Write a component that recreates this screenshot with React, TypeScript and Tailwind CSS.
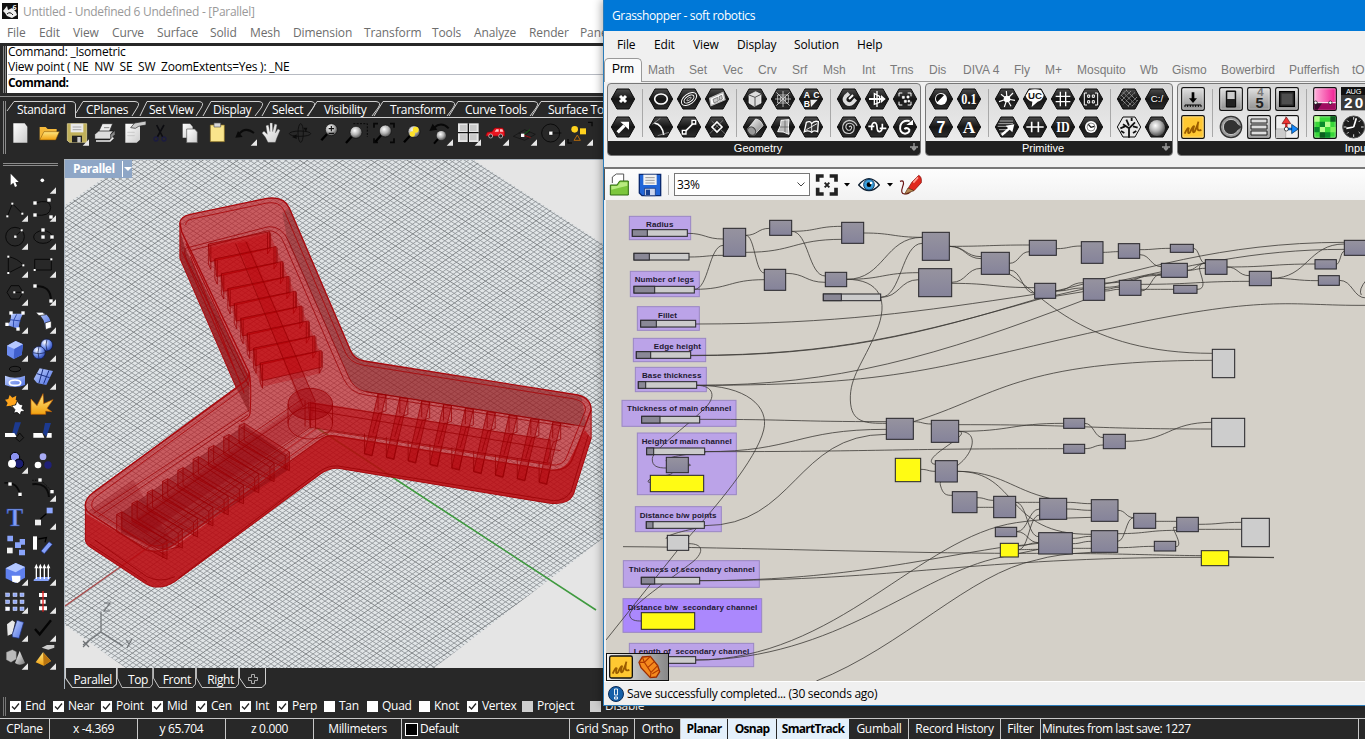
import React from "react";

type P = { children?: React.ReactNode };

const UI = "font-['Open_Sans','Noto_Sans',sans-serif]";

/* ---------- shared icon cells (28px cell, 84 unit grid) ---------- */

function Cell({ children, more }: P & { more?: boolean }) {
  return (
    <svg viewBox="0 0 84 84" className="block h-7 w-7 shrink-0" fill="none">
      {children}
      {more && <path d="M81 61V80H62Z" fill="#e8e8e8" />}
    </svg>
  );
}

function Lens({ x, y, children }: P & { x: number; y: number }) {
  return (
    <g>
      <path d={`M${x - 12} ${y + 12}L${x - 30} ${y + 32}`} stroke="#000" strokeWidth="7" />
      <circle cx={x} cy={y} r="18" fill="url(#ball)" stroke="#111" strokeWidth="2" />
      {children}
    </g>
  );
}

function Defs() {
  return (
    <svg className="absolute h-0 w-0">
      <defs>
        <radialGradient id="ball" cx=".4" cy=".35" r=".7">
          <stop offset="0" stopColor="#fff" />
          <stop offset=".5" stopColor="#b4b4b4" />
          <stop offset="1" stopColor="#444" />
        </radialGradient>
        <radialGradient id="blueBall" cx=".35" cy=".3" r=".75">
          <stop offset="0" stopColor="#fff" />
          <stop offset=".5" stopColor="#7d9cf2" />
          <stop offset="1" stopColor="#2a45b0" />
        </radialGradient>
        <linearGradient id="blue" x1="0" y1="0" x2="1" y2="1">
          <stop offset="0" stopColor="#c4d4ff" />
          <stop offset="1" stopColor="#4a6ce0" />
        </linearGradient>
        <linearGradient id="paper" x1="0" y1="0" x2="1" y2="1">
          <stop offset="0" stopColor="#fff" />
          <stop offset="1" stopColor="#ccc" />
        </linearGradient>
        <linearGradient id="gold" x1="0" y1="0" x2="0" y2="1">
          <stop offset="0" stopColor="#ffe680" />
          <stop offset="1" stopColor="#f0a010" />
        </linearGradient>
        <linearGradient id="hex" x1="0" y1="0" x2="0" y2="1">
          <stop offset="0" stopColor="#4a4a4a" />
          <stop offset=".5" stopColor="#151515" />
          <stop offset="1" stopColor="#2c2c2c" />
        </linearGradient>
        <linearGradient id="steel" x1="0" y1="0" x2="1" y2="1">
          <stop offset="0" stopColor="#fff" />
          <stop offset="1" stopColor="#777" />
        </linearGradient>
        <linearGradient id="tile" x1="0" y1="0" x2="0" y2="1">
          <stop offset="0" stopColor="#e2e2e2" />
          <stop offset="1" stopColor="#8e8e8e" />
        </linearGradient>
        <linearGradient id="pink" x1="0" y1="0" x2="1" y2="0">
          <stop offset="0" stopColor="#ffb4dc" />
          <stop offset="1" stopColor="#f01890" />
        </linearGradient>
        <linearGradient id="node" x1="0" y1="0" x2="0" y2="1">
          <stop offset="0" stopColor="#96939f" />
          <stop offset="1" stopColor="#85839a" />
        </linearGradient>
      </defs>
    </svg>
  );
}

/* ---------- Rhino ---------- */

const rhinoMenu: [string, string][] = [
  ["File", "w-8"], ["Edit", "w-[34px]"], ["View", "w-[39px]"], ["Curve", "w-[45px]"], ["Surface", "w-[53px]"],
  ["Solid", "w-10"], ["Mesh", "w-[43px]"], ["Dimension", "w-[71px]"], ["Transform", "w-[68px]"], ["Tools", "w-[42px]"],
  ["Analyze", "w-[55px]"], ["Render", "w-[51px]"], ["Panels", "w-[50px]"],
];

const rhinoTabs: [string, string][] = [
  ["Standard", "w-[69px]"], ["CPlanes", "w-[63px]"], ["Set View", "w-16"], ["Display", "w-[59px]"], ["Select", "w-[52px]"],
  ["Visibility", "w-[66px]"], ["Transform", "w-[75px]"], ["Curve Tools", "w-[83px]"], ["Surface Tools", "w-[90px]"],
];

function TopTools() {
  return (
    <div className="ml-[6px] mt-px flex h-7">
      <Cell><path d="M22 13H56L64 23V71H22Z" fill="url(#paper)" /></Cell>
      <Cell><path d="M17 62V24H35L41 30H68V38" fill="#f5b93a" /><path d="M17 63L30 38H76L65 63Z" fill="url(#gold)" stroke="#7a4a00" strokeWidth="1.5" /></Cell>
      <Cell more><path d="M16 14H74V70H22L16 64Z" fill="#c0b05a" stroke="#eee3a0" strokeWidth="2" /><path d="M26 14H64V40H26Z" fill="#e9e9e9" /><path d="M32 24H58M32 32H58" stroke="#888" strokeWidth="2" /><path d="M30 50H60V70H30Z" fill="#222" /><path d="M46 54H56V70H46Z" fill="#ccc" /></Cell>
      <Cell><path d="M26 38L37 14H68L58 38Z" fill="#eee" stroke="#222" strokeWidth="2" /><path d="M14 46L26 36H70L62 46V60H14Z" fill="#ddd" stroke="#111" strokeWidth="2" /><path d="M62 60L74 46V36L62 48Z" fill="#888" /><path d="M18 66H60L70 56" stroke="#eee" strokeWidth="5" /><path d="M42 26H58" stroke="#888" strokeWidth="3" /></Cell>
      <Cell><path d="M22 14H66V62L56 71H22Z" fill="url(#paper)" /><path d="M28 40H50M28 50H50" stroke="#bbb" strokeWidth="2" /><path d="M38 26L50 12L84 6V18L62 22L52 28Z" fill="#ccc" stroke="#222" strokeWidth="2" /></Cell>
      <Cell><path d="M32 18L50 54M54 18L34 54" stroke="#0c0c10" strokeWidth="5" /><circle cx="30" cy="60" r="6" stroke="#1c1c40" strokeWidth="4" /><circle cx="54" cy="60" r="6" stroke="#1c1c40" strokeWidth="4" /></Cell>
      <Cell><path d="M26 14H48L56 23V56H26Z" fill="url(#paper)" /><path d="M38 30H62L70 39V71H38Z" fill="url(#paper)" stroke="#555" strokeWidth="2" /></Cell>
      <Cell><path d="M25 18H67V68H25Z" fill="#f9e58c" stroke="#8c7020" strokeWidth="2" /><path d="M36 12H56V24H36Z" fill="#d9d9d9" stroke="#555" strokeWidth="2" /></Cell>
      <Cell more><path d="M16 56L24 36L38 54Z" fill="#0a0a0a" /><path d="M28 44Q46 22 72 42" stroke="#0a0a0a" strokeWidth="6" /></Cell>
      <Cell><path d="M30 70L22 54L12 42L18 37L28 46L24 20L31 18L36 38L36 12H43L44 38L50 15L57 17L52 42L60 30L66 34L56 58L52 70Z" fill="url(#paper)" stroke="#666" strokeWidth="1" /></Cell>
      <Cell><ellipse cx="42" cy="44" rx="32" ry="8" stroke="#0c0c0c" strokeWidth="2.500" /><ellipse cx="44" cy="42" rx="8" ry="28" stroke="#0c0c0c" strokeWidth="2.500" /><path d="M18 54L32 46V60ZM60 38L52 26H64Z" fill="#0c0c0c" /></Cell>
      <Cell><Lens x={52} y={32}><path d="M44 29H60M52 21V37M44 43H60" stroke="#111" strokeWidth="3.5" /></Lens></Cell>
      <Cell><path d="M34 14H76V54" stroke="#080808" strokeWidth="3" strokeDasharray="6 4" /><Lens x={42} y={40} /></Cell>
      <Cell><path d="M12 26V14H24M60 14H72V26M72 58V70H60M24 70H12V58" stroke="#070707" strokeWidth="5" /><Lens x={46} y={36} /></Cell>
      <Cell><Lens x={48} y={38}><circle cx="53" cy="32" r="9" fill="#ffe32b" /><circle cx="43" cy="45" r="8" fill="#ffe32b" /></Lens></Cell>
      <Cell more><path d="M10 36L20 14L34 32Z" fill="#080808" /><path d="M24 26Q46 6 68 28" stroke="#080808" strokeWidth="6" /><path d="M36 60L24 74" stroke="#000" strokeWidth="6" /><circle cx="46" cy="50" r="14" fill="url(#ball)" /></Cell>
      <Cell more><path d="M12 13H74V69H12Z" fill="#e6e6e6" /><path d="M43 13V69M12 41H74" stroke="#111" strokeWidth="4" /><path d="M18 18H38V36H18ZM48 18H68V36H48ZM18 46H38V64H18ZM48 46H68V64H48Z" fill="#c9c9c9" /></Cell>
      <Cell more><path d="M12 48L16 40L30 38L38 27H62L68 38V51H12Z" fill="#ea1520" stroke="#8c0008" strokeWidth="2" /><path d="M38 38L43 31H50V38ZM54 38V31H61L64 38Z" fill="#ffc4c4" /><circle cx="26" cy="51" r="6" fill="#222" stroke="#ddd" strokeWidth="2" /><circle cx="56" cy="51" r="6" fill="#222" stroke="#ddd" strokeWidth="2" /></Cell>
      <Cell more><path d="M10 52L44 32L76 46L44 64Z" stroke="#111" strokeWidth="2" /><path d="M26 42L60 56M30 58L60 38" stroke="#111" strokeWidth="2" /><path d="M40 48L60 32" stroke="#0b650b" strokeWidth="3" /><path d="M40 48L62 56" stroke="#a01010" strokeWidth="3" /><path d="M33 44H43V54H33Z" fill="#fff" /></Cell>
      <Cell more><circle cx="38" cy="42" r="27" stroke="#0b0b0b" strokeWidth="3" /><path d="M40 42H70" stroke="#0b0b0b" strokeWidth="3" /><path d="M33 37H44V48H33Z" fill="#fff" stroke="#000" /></Cell>
      <Cell more><path d="M66 10H78V22M6 60V72H18" stroke="#080808" strokeWidth="4" /><circle cx="26" cy="31" r="10" fill="#ffd21e" /><path d="M42 28H60V46H42Z" fill="#ffd21e" /><path d="M24 64L34 48L43 64Z" stroke="#b4690c" strokeWidth="3" /></Cell>
    </div>
  );
}

const Dot = ({ x, y, s = 10 }: { x: number; y: number; s?: number }) => (
  <rect x={x - s / 2} y={y - s / 2} width={s} height={s} fill="#fff" />
);

function SideTools() {
  const k = "#0a0a0a";
  return (
    <div className="ml-px mt-px grid w-14 grid-cols-2">
      <Cell><path d="M29 20V54L37 47L42 60L48 57L43 45H53Z" fill="#fff" /></Cell>
      <Cell more><circle cx="40" cy="40" r="5.5" fill="#fff" /></Cell>
      <Cell more><path d="M19 64L34 26L64 56" stroke={k} strokeWidth="3" /><Dot x={19} y={64} s={6} /><Dot x={34} y={26} s={6} /><Dot x={64} y={56} s={6} /></Cell>
      <Cell more><path d="M18 24Q64 10 65 38Q64 66 18 60" stroke={k} strokeWidth="3" /><Dot x={18} y={24} /><Dot x={60} y={15} /><Dot x={18} y={60} /><Dot x={66} y={66} /></Cell>
      <Cell more><circle cx="42" cy="41" r="28" stroke={k} strokeWidth="3" /><path d="M42 41L62 22" stroke={k} strokeWidth="3" /><Dot x={43} y={41} s={7} /><Dot x={62} y={22} s={6} /></Cell>
      <Cell more><ellipse cx="42" cy="42" rx="28" ry="19" stroke={k} strokeWidth="3" /><Dot x={42} y={21} /><Dot x={42} y={42} /><Dot x={69} y={42} /></Cell>
      <Cell more><path d="M22 66V17Q50 22 67 43Z" stroke={k} strokeWidth="3" /><Dot x={22} y={17} s={6} /><Dot x={67} y={43} s={6} /><Dot x={22} y={66} s={6} /></Cell>
      <Cell more><path d="M17 25H67V57H17Z" stroke={k} strokeWidth="3" /><Dot x={67} y={25} s={6} /><Dot x={17} y={57} s={6} /></Cell>
      <Cell more><path d="M18 40L30 20H54L66 40L54 60H30Z" stroke={k} strokeWidth="3" /><path d="M40 40H62" stroke={k} strokeWidth="3" /><Dot x={40} y={40} s={6} /><Dot x={65} y={40} s={6} /></Cell>
      <Cell more><path d="M18 22Q66 18 66 66" stroke={k} strokeWidth="6" /><Dot x={18} y={21} /><Dot x={66} y={66} /></Cell>
      <Cell more><path d="M30 20L66 20Q52 46 54 66L18 54Q32 44 30 20Z" fill="url(#blue)" /><path d="M47 22Q34 40 37 60M26 38L60 42" stroke="#1d3aa0" strokeWidth="2.5" /><Dot x={30} y={18} /><Dot x={66} y={18} /><Dot x={18} y={52} /><Dot x={51} y={66} /></Cell>
      <Cell more><path d="M22 16L40 16Q68 28 67 62L48 64Q50 36 22 16Z" fill="url(#blue)" /><path d="M20 16H40L50 23L30 26ZM48 48L67 42V62L50 68Z" fill="#fff" stroke="#111" strokeWidth="2" /></Cell>
      <Cell more><path d="M18 32L44 18L66 28L62 60L38 72L18 60Z" fill="#6d8cf0" /><path d="M18 32L44 18L66 28L40 42Z" fill="#b6c8ff" /><path d="M40 42L66 28L62 60L38 72Z" fill="#405fcc" /></Cell>
      <Cell more><circle cx="53" cy="30" r="18" fill="url(#blueBall)" stroke="#0a1440" strokeWidth="2" /><circle cx="30" cy="53" r="19" fill="url(#blueBall)" stroke="#0a1440" strokeWidth="2" /><path d="M12 53Q30 60 48 53M30 34Q24 52 30 71M54 12Q48 30 54 47" stroke="#0a1440" strokeWidth="2" /></Cell>
      <Cell more><ellipse cx="42" cy="18" rx="17" ry="8" stroke={k} strokeWidth="3" /><path d="M12 38Q42 50 72 38V66Q42 78 12 66Z" fill="url(#blue)" /><ellipse cx="42" cy="59" rx="17" ry="8" stroke="#fff" strokeWidth="5" /></Cell>
      <Cell more><path d="M14 48L32 16L72 24L52 66L24 60Z" fill="url(#blue)" /><path d="M24 32L62 44M42 18L30 60M60 22L44 62" stroke="#1b2f80" strokeWidth="3" /></Cell>
      <Cell><path d="M12 26L22 24L26 12L34 20L46 14L44 26L52 32L42 40L40 52L28 44L16 46L20 36Z" fill="#ffa51c" /><path d="M32 44L44 42L48 30L56 40L66 42L62 52L72 60L60 62L58 72L48 64L38 66L42 56Z" fill="#fff" stroke="#000" strokeWidth="2" /></Cell>
      <Cell><path d="M6 70V24L24 44L42 8L44 38L72 26L54 52L68 62L50 60V70Z" fill="url(#gold)" stroke="#c66000" strokeWidth="2" /></Cell>
      <Cell><path d="M42 10L60 10L46 48L34 42Z" fill="#1c3a90" /><path d="M12 42H40L47 54H12Z" fill="#fff" /><path d="M44 58L56 42L68 56L56 68Z" stroke="#0a0a0a" strokeWidth="3" /></Cell>
      <Cell><path d="M48 12H66L52 54L42 42Z" fill="#1c3a90" /><path d="M13 42H40L46 56H13ZM56 42H68V56H52Z" fill="#fff" /></Cell>
      <Cell more><circle cx="42" cy="30" r="14" fill="#8b92f0" stroke="#000" strokeWidth="3" /><circle cx="54" cy="50" r="14" fill="#1a1d70" stroke="#000" strokeWidth="3" /><circle cx="33" cy="50" r="12" fill="#fff" /></Cell>
      <Cell><circle cx="42" cy="29" r="10" fill="#a9acf5" /><circle cx="27" cy="54" r="10" fill="#fff" /><circle cx="57" cy="54" r="11" fill="#202078" /></Cell>
      <Cell><path d="M10 24Q52 18 58 66" stroke={k} strokeWidth="5" /><Dot x={27} y={27} /><Dot x={57} y={58} /></Cell>
      <Cell more><path d="M10 28Q56 22 60 66" stroke={k} strokeWidth="6" /><path d="M10 16H36L70 50" stroke={k} strokeWidth="3" strokeDasharray="4 4" /><Dot x={33} y={15} /><Dot x={69} y={50} /></Cell>
      <Cell><text x="42" y="68" textAnchor="middle" fontSize="74" fontWeight="bold" fontFamily="Liberation Serif" fill="#7f9cf6" stroke="#26408f" strokeWidth="1.5">T</text></Cell>
      <Cell more><path d="M18 50H36V67H18Z" fill="#eee" /><path d="M53 14H71V31H53Z" fill="#8fa8ff" /><path d="M34 48L52 32" stroke="#000" strokeWidth="4" /></Cell>
      <Cell><path d="M19 14H36V31H19ZM56 24H72V41H56ZM42 34H60V51H42ZM54 56H72V73H54Z" fill="#8aa4fa" /><path d="M18 50H35V67H18Z" fill="#f2f2f2" /></Cell>
      <Cell><path d="M12 16H24V56H12Z" fill="#fff" /><path d="M28 24L52 20L48 34" stroke="#000" strokeWidth="4" /><path d="M36 60L60 32L70 40L46 68Z" fill="#86a2fa" stroke="#182c80" strokeWidth="2" /></Cell>
      <Cell more><path d="M14 28L44 12L72 24V56L44 72L14 58Z" fill="#5f80ee" /><path d="M14 28L44 12L72 24L44 40Z" fill="#b3c7ff" /><path d="M32 50H58V66L50 72L34 68Z" fill="#fff" /></Cell>
      <Cell more><path d="M14 62L24 54H66L58 66H14Z" fill="#86a2fa" /><path d="M22 60V24M34 60V24M46 60V24M58 60V24" stroke="#fff" strokeWidth="4" /><path d="M22 14L16 28H28ZM34 14L28 28H40ZM46 14L40 28H52ZM58 14L52 28H64Z" fill="#fff" /></Cell>
      <Cell more>{[18, 39, 60].map((y) => [14, 36, 57].map((x) => <rect key={`${x}-${y}`} x={x} y={y} width="12" height="11" fill={x === 14 && y === 60 ? "#fff" : "#93a9f5"} stroke="#dfe6ff" strokeWidth="1.5" />))}</Cell>
      <Cell more><path d="M30 18H54V30H30ZM34 38H50V50H34ZM30 58H54V70H30Z" fill="#fff" /><path d="M42 12V74" stroke="#e01818" strokeWidth="4" /></Cell>
      <Cell more><path d="M18 28L34 16L42 22L34 56L20 62Z" fill="#e8e8e8" /><path d="M34 58L48 16L68 22L54 70L34 66Z" fill="url(#blue)" stroke="#1b2f80" strokeWidth="2" /></Cell>
      <Cell more><path d="M18 42L32 58L66 16" stroke="#050505" strokeWidth="7" /></Cell>
      <Cell more><path d="M16 28L34 20L46 26V48L30 58L16 50Z" fill="#bbb" stroke="#666" /><path d="M56 24L72 60Q56 70 42 60Z" fill="url(#steel)" /></Cell>
      <Cell more><path d="M38 14L54 6H76V14L58 20Z" fill="#ccc" /><path d="M20 58L42 28L66 54L44 68Z" fill="url(#gold)" /><path d="M42 28L44 68L66 54Z" fill="#b87410" /></Cell>
    </div>
  );
}

/* model view: ground grid plus the translucent three-armed body */
function ModelView() {
  const minor: string[] = [];
  const major: string[] = [];
  const N = 80;
  const sa = 373 / N;
  const sb = 394 / N;
  for (let i = -N; i <= N; i++) {
    const a = 222 + i * sa;
    const b = 648 + i * sb;
    const la = `M0 ${a.toFixed(2)}L620 ${(a + 0.65 * 620).toFixed(2)}`;
    const lb = `M0 ${b.toFixed(2)}L620 ${(b - 0.705 * 620).toFixed(2)}`;
    (i % 5 === 0 ? major : minor).push(la, lb);
  }
  const nine = [0, 1, 2, 3, 4, 5, 6, 7, 8];
  return (
    <svg viewBox="65 160 539 508" className="block h-[508px] w-[539px]" fill="none">
      <clipPath id="ground">
        <path d="M-230 415L294 43L810 379L286 782Z" />
      </clipPath>
      <rect x="65" y="160" width="539" height="508" fill="#e5e5e5" />
      <g clipPath="url(#ground)">
        <rect x="65" y="160" width="539" height="508" fill="#e1e5e7" />
        <path d={minor.join("")} stroke="#8f9497" strokeWidth=".85" />
        <path d={major.join("")} stroke="#7c8184" strokeWidth=".95" />
      </g>
      <path d="M65 606L317 428" stroke="#a84848" strokeWidth="1.4" />
      <path d="M317 428L596 610" stroke="#3f9a3f" strokeWidth="1.6" />
      <g stroke="#6f7376" strokeWidth="1.2">
        <path d="M101 612V632L83 645M101 632L123 646" />
        <path d="M104 603H110L104 611H110M83 641L89 647M89 641L83 647M126 640L129 644M132 639L127 648" />
      </g>
      <g transform="translate(60 180) scale(.34759 .33333)">
        <path
          d="M345 130Q345 110 375 103L595 55Q645 48 660 85L835 510Q845 538 875 543L1490 645Q1528 655 1528 690V775L1478 940Q1465 975 1410 970L800 865Q775 862 745 885L330 1205Q285 1235 245 1210L85 1100Q72 1090 73 1075V975Q73 955 95 938L508 625L345 235Z"
          fill="#bd1a20" fillOpacity=".68"
        />
        <path d="M770 765L1410 870Q1455 870 1470 830L1510 750L1528 775L1478 940Q1465 975 1410 970L800 865Q775 862 745 885L330 1205Q285 1235 245 1210L85 1100Q72 1090 73 1075V1000L250 1110Q300 1125 330 1100Z" fill="#b80006" fillOpacity=".62" />
        <path d="M80 995L210 900L330 1095Q300 1115 255 1100Z" fill="#8a0008" fillOpacity=".25" />
        <path d="M345 150L360 205L545 590V700L508 625L345 235Z" fill="#7a0508" fillOpacity=".5" />
        <path d="M640 100L660 85L835 510L875 543L1500 650L1515 740L880 635Q845 625 830 590L655 185Z" fill="#5e2424" fillOpacity=".3" />
        <path d="M510 190L540 185L735 665L720 740L250 1060L200 1030L690 670Z" fill="#a00008" fillOpacity=".32" />
        <path d="M720 665L1410 780L1405 855L720 740Z" fill="#b80008" fillOpacity=".5" />
        <path d="M427 205L603 160L750 520L750 580L580 620Z" fill="#b80008" fillOpacity=".3" />
        <path d="M530 735L660 830L655 870L300 1110L175 1060V1000Z" fill="#780008" fillOpacity=".38" />
        <g stroke="#980004" strokeWidth="2.2" strokeLinejoin="round">
          {nine.map((i) => (
            <g key={`t${i}`} transform={`translate(${i * 18.6} ${i * 44.6})`}>
              <path d="M427 192L603 155V205L432 245Z" fill="#c40006" fillOpacity=".5" />
              <path d="M427 192V252L434 268V196M597 158V222L606 206V158" />
            </g>
          ))}
          {nine.map((i) => (
            <g key={`r${i}`} transform={`translate(${i * 62.8} ${i * 10.7})`}>
              <path d="M915 642L938 645L897 826L876 820Z" fill="#b00008" fillOpacity=".38" />
              <path d="M938 645V692L917 700L900 760M876 760V822L898 828L910 765M915 642V690" />
            </g>
          ))}
          {nine.map((i) => (
            <g key={`l${i}`} transform={`translate(${i * -44} ${i * 33.2})`}>
              <path d="M515 738L530 730L660 816V872L648 866L515 790Z" fill="#a00008" fillOpacity=".28" />
              <path d="M515 738L648 828L660 816M648 828V868M530 730V782L655 860" />
            </g>
          ))}
          <path d="M505 190L700 680M535 185L735 665M715 668L1410 780V850L720 742ZM715 668L225 1020M720 742L300 1050M700 655L240 985M720 690L1440 812M720 665V745M705 660V740M735 670V745" />
          <path d="M360 205L600 140Q640 138 658 185L830 590Q845 628 880 635L1510 740M375 212L597 152Q630 150 645 190L815 595Q835 640 880 645L1470 742M360 205Q355 220 365 240L545 620" />
          <path d="M97 1000L545 690M110 1010L540 705M880 635L1480 735" />
          <ellipse cx="720" cy="672" rx="64" ry="47" fill="#a00008" fillOpacity=".45" />
          <ellipse cx="720" cy="730" rx="64" ry="47" />
          <path d="M656 672V730M784 672V730" />
          <path d="M240 1075Q280 1125 345 1100M800 858L1420 962Q1455 962 1470 935L1520 765M340 1195L745 875Q775 855 800 858M250 1205L85 1092M100 1080L250 1190Q290 1210 330 1190" />
        </g>
        <g stroke="#a80a0e" strokeWidth="4" strokeLinejoin="round">
          <path d="M345 130Q345 110 375 103L595 55Q645 48 660 85L835 510Q845 538 875 543L1490 645Q1528 655 1528 690L1475 835Q1460 875 1410 870L790 768Q770 765 755 775L330 1092Q285 1125 245 1108L85 1000Q72 990 73 975Q73 955 95 938L530 605Q548 590 543 575L350 155Z" />
          <path d="M362 135Q360 122 380 117L595 69Q632 63 645 92L820 515Q833 548 870 555L1480 657Q1513 665 1512 690L1460 825Q1450 860 1410 855L790 756Q765 752 745 767L325 1080Q290 1105 255 1095L98 990Q88 982 92 968Q95 955 110 945L535 620Q550 605 545 585" strokeWidth="2.6" />
          <path d="M345 130V235L508 625M543 575Q552 600 547 700Q545 715 520 725M1528 690V775L1478 940Q1465 975 1410 970L800 865Q775 862 745 885L330 1205Q285 1235 245 1210L85 1100Q72 1090 73 1075V975M352 215L520 610M362 190L540 590M375 230L530 640M508 625L95 938" strokeWidth="3" />
        </g>
      </g>
    </svg>
  );
}

const viewTabs: [string, string][] = [["Parallel", "w-[52px]"], ["Top", "w-9"], ["Front", "w-[43px]"], ["Right", "w-[43px]"]];

const snaps: [string, string, number][] = [
  ["End", "w-[43px]", 1], ["Near", "w-12", 1], ["Point", "w-[51px]", 1], ["Mid", "w-11", 1], ["Cen", "w-11", 1], ["Int", "w-[37px]", 1],
  ["Perp", "w-[47px]", 1], ["Tan", "w-[43px]", 0], ["Quad", "w-[52px]", 0], ["Knot", "w-12", 0], ["Vertex", "w-[55px]", 1],
  ["Project", "w-[68px]", 2], ["Disable", "w-[60px]", 2],
];

const status: [string, string][] = [
  ["CPlane", "w-[50px]"], ["x -4.369", "w-[88px]"], ["y 65.704", "w-[88px]"], ["z 0.000", "w-[88px]"], ["Millimeters", "w-[88px]"],
];
const status2: [string, string, boolean][] = [
  ["Grid Snap", "w-[65px]", false], ["Ortho", "w-[46px]", false], ["Planar", "w-[47px]", true], ["Osnap", "w-[49px]", true],
  ["SmartTrack", "w-[73px]", true], ["Gumball", "w-[59px]", false], ["Record History", "w-[92px]", false], ["Filter", "w-10", false],
];

function Rhino() {
  return (
    <div className={`flex h-[739px] w-[1365px] flex-col bg-[#282828] text-[12px] ${UI}`}>
      <div className="flex h-[22px] items-center bg-white pl-0.5 text-[12px] text-[#999]">
        <svg viewBox="0 0 16 16" className="mr-[5px] h-4 w-4">
          <rect width="16" height="16" fill="#111" />
          <path d="M1 8L5 3L6 7L10 5L14 9L15 12L10 15L5 13L3 10Z" fill="#eee" />
          <path d="M5 11Q8 8 11 12" stroke="#111" fill="none" />
          <text x="10.5" y="6.5" fontSize="7" fontWeight="bold" fill="#fff">6</text>
        </svg>
        <span className="pt-px tracking-[-0.29px]">Untitled - Undefined 6 Undefined - [Parallel]</span>
      </div>
      <div className="flex h-[21px] w-[603px] shrink-0 items-center overflow-hidden bg-white pl-[7px] text-[#6d6d6d]">
        {rhinoMenu.map(([t, w]) => <span key={t} className={`${w} shrink-0 tracking-[-0.12px]`}>{t}</span>)}
      </div>
      <div className="mt-[3px] flex h-[47px] gap-[1px] pl-[3px]">
        <div className="w-[3px] border-x border-[#8b8b8b]" />
        <div className="flex flex-1 flex-col bg-white pl-[1px] text-black">
          <div className="h-[14px] leading-[12px] tracking-[-0.24px]">Command: _Isometric</div>
          <div className="h-[15px] whitespace-pre border-b border-[#b6bac2] leading-[13px] tracking-[-0.24px]">View point ( NE  NW  SE  SW  ZoomExtents=Yes ): _NE</div>
          <div className="font-bold leading-[16px] tracking-[-0.55px]">Command:</div>
        </div>
      </div>
      <div className="mt-[3px] h-px bg-[#8b8b8b]" />
      <div className="flex h-[62px] pt-[4px]">
        <div className="ml-[3px] h-[53px] w-[3px] border-x border-[#8b8b8b]" />
        <div className="relative -ml-1.5 flex w-[603px] flex-col overflow-hidden">
          <svg viewBox="0 0 603 17" className="absolute left-0 top-0 h-[17px] w-[603px]" fill="none" stroke="#cfcfcf">
            <path d="M7 10L14 .5H71Q75.500 .5 75.500 4V16.500H603" />
            <path d="M76 12L83 .5H135Q141 1 137 7L132 15" />
            <path d="M140 15L147 .5H199Q205 1 201 7L196 15" />
            <path d="M203 15L211 .5H259Q265 1 261 7L255 15" />
            <path d="M262 15L270 .5H311Q317 1 313 7L307 15" />
            <path d="M308 15L317 .5H376Q382 1 378 7L372 15" />
            <path d="M374 15L383 .5H451Q457 1 453 7L447 15" />
            <path d="M449 15L458 .5H534Q540 1 536 7L530 15" />
            <path d="M532 15L541 .5H603" />
          </svg>
          <div className="flex h-[17px] items-center pl-[17px] pt-px text-white">
            {rhinoTabs.map(([t, w]) => <span key={t} className={`${w} shrink-0 whitespace-nowrap tracking-[-0.32px]`}>{t}</span>)}
          </div>
          <TopTools />
        </div>
      </div>
      <div className="flex h-[530px]">
        <div className="w-[64px] pt-1">
          <div className="ml-[3px] h-[3px] w-[55px] border-y border-[#8b8b8b]" />
          <SideTools />
        </div>
        <div className="flex w-[540px] flex-col border-l border-[#aab4be]">
          <div className="relative border-t border-[#aab4be]">
            <ModelView />
            <div className="absolute left-0 top-0 flex h-[18px] items-center bg-[#8ea6c6] font-bold text-white">
              <span className="w-[57px] pl-[8px] tracking-[-0.5px]">Parallel</span>
              <span className="flex h-[16px] w-[10px] items-center justify-center border-l border-white">
                <svg viewBox="0 0 8 4" className="h-1 w-2"><path d="M0 0H8L4 4Z" fill="#fff" /></svg>
              </span>
            </div>
          </div>
          <div className="flex h-5 text-white">
            {viewTabs.map(([t, w]) => (
              <div key={t} className={`${w} relative flex h-5 justify-end pr-[5px] leading-[23px] tracking-[-0.35px]`}>
                <svg viewBox="0 0 50 20" preserveAspectRatio="none" className="absolute inset-0 h-5 w-full" fill="none" stroke="#cfcfcf">
                  <path d="M.5 0V10L7 19.500H46L49.500 16V0" />
                </svg>
                {t}
              </div>
            ))}
            <svg viewBox="0 0 27 20" className="h-5 w-[27px]" fill="none" stroke="#cfcfcf">
              <path d="M.5 0V10L7 19.500H23L26.500 16V0" />
              <path d="M12.500 6.500H15.500V9.500H18.500V12.500H15.500V15.500H12.500V12.500H9.500V9.500H12.500Z" stroke="#aaa" />
            </svg>
          </div>
        </div>
      </div>
      <div className="flex h-[29px] items-center pb-px pl-[3px] pt-1.5 text-white">
        <div className="mr-[4px] h-[19px] w-[3px] border-x border-[#777]" />
        {snaps.map(([t, w, s]) => (
          <span key={t} className={`${w} flex shrink-0 items-center gap-[4px] tracking-[-0.28px]`}>
            <svg viewBox="0 0 11 11" className="h-[11px] w-[11px] shrink-0">
              <rect width="11" height="11" fill={s === 2 ? "#cfcfcf" : "#fff"} />
              {s === 1 && <path d="M2 5.500L4.500 8L9 2.500" stroke="#222" strokeWidth="1.3" fill="none" />}
            </svg>
            {t}
          </span>
        ))}
      </div>
      <div className="flex h-[21px] border-t border-[#c8c8c8] leading-[20px] text-white">
        {status.map(([t, w]) => <span key={t} className={`${w} shrink-0 border-r border-[#c8c8c8] text-center tracking-[-0.35px]`}>{t}</span>)}
        <span className="flex w-[168px] items-center gap-[2px] border-r border-[#c8c8c8] pl-[3px] tracking-[-0.3px]">
          <span className="h-[13px] w-[13px] border border-white bg-black" />Default
        </span>
        {status2.map(([t, w, on]) =>
          on ? (
            <span key={t} className={`${w} shrink-0 border-r border-[#282828] bg-[#e4f0fb] text-center font-bold tracking-[-0.7px] text-black`}>{t}</span>
          ) : (
            <span key={t} className={`${w} shrink-0 border-r border-[#c8c8c8] text-center tracking-[-0.3px]`}>{t}</span>
          )
        )}
        <span className="w-[318px] border-r border-[#c8c8c8] pl-px tracking-[-0.42px]">Minutes from last save: 1227</span>
      </div>
    </div>
  );
}

/* ---------- Grasshopper ---------- */

function Hex({ children, light }: P & { light?: boolean }) {
  return (
    <Cell>
      <path d="M7 42L24 12H60L77 42L60 72H24Z" fill={light ? "#e8e8e8" : "url(#hex)"} stroke="#0a0a0a" strokeWidth="3" strokeLinejoin="round" />
      <g stroke="#fff" strokeWidth="4">{children}</g>
    </Cell>
  );
}

function Tile({ children, fill = "url(#tile)" }: P & { fill?: string }) {
  return (
    <Cell>
      <rect x="8" y="8" width="68" height="68" rx="5" fill={fill} stroke="#111" strokeWidth="3.500" />
      <rect x="11.500" y="11.500" width="61" height="61" rx="2" stroke="#fff" strokeOpacity=".6" strokeWidth="2" />
      {children}
    </Cell>
  );
}

const Scribble = () => (
  <path d="M17 62Q26 42 29 46Q24 66 33 58Q42 38 45 40Q38 64 47 56Q58 30 58 26Q50 60 67 50" stroke="#9a5c00" strokeWidth="5.5" />
);

const Glyph = ({ children, size = 40, x = 42, y = 56, serif, len }: P & { size?: number; x?: number; y?: number; serif?: boolean; len?: number }) => (
  <text x={x} y={y} textAnchor="middle" fontSize={size} fontWeight="bold" fill="#fff" stroke="none" textLength={len} lengthAdjust="spacingAndGlyphs" fontFamily={serif ? "Liberation Serif" : "Liberation Sans"}>{children}</text>
);

const Group = ({ children, cols }: P & { cols: string }) => <div className={`grid h-14 shrink-0 ${cols}`}>{children}</div>;
const Sep = () => <div className="mx-[4.500px] mt-1 h-12 w-px shrink-0 bg-[#a8a8a8]" />;

function Panel({ children, title, w, plus, pl }: P & { title: string; w: string; plus?: boolean; pl?: string }) {
  return (
    <div className={`${w} flex h-[73px] shrink-0 flex-col overflow-hidden rounded-[4px] border border-[#777] bg-gradient-to-b from-[#d9d9d9] to-[#f0f0f0]`}>
      <div className="flex h-[58px] pl-px pt-px">{children}</div>
      <div className={`relative h-[14px] bg-[#202020] text-center font-['Liberation_Sans',sans-serif] text-[11px] leading-[14px] text-white ${pl ?? ""}`}>
        {title}
        {plus && (
          <svg viewBox="0 0 8 8" className="absolute right-[2px] top-[2px] h-2 w-2"><path d="M4 0V8M0 4H8M2 5L4 7L6 5" stroke="#999" strokeWidth="1.400" fill="none" /></svg>
        )}
      </div>
    </div>
  );
}

function Ribbon() {
  return (
    <div className="flex gap-[4px] overflow-hidden pl-[3px] pt-[1px]">
      <Panel title="Geometry" w="w-[314px]" plus pl="pr-3">
        <Group cols="grid-cols-1">
          <Hex><path d="M33 33L51 51M51 33L33 51" strokeWidth="9" /></Hex>
          <Hex><path d="M26 58L46 38" strokeWidth="10" /><path d="M34 26H60V50Z" fill="#fff" stroke="none" /></Hex>
        </Group>
        <Sep />
        <Group cols="grid-cols-3">
          <Hex><ellipse cx="42" cy="42" rx="19" ry="15" strokeWidth="5" /></Hex>
          <Hex><g transform="rotate(-35 42 42)"><ellipse cx="42" cy="42" rx="26" ry="15" strokeWidth="3" /><ellipse cx="42" cy="42" rx="17" ry="9" strokeWidth="3" /><ellipse cx="42" cy="42" rx="8" ry="3" strokeWidth="2" /></g></Hex>
          <Hex><path d="M20 40L60 22L66 44L24 62Z" fill="#fff" stroke="#bbb" /><path d="M30 43L44 37L46 48L33 54ZM48 35L56 31L58 42L50 46Z" fill="#ccc" stroke="#555" strokeWidth="2" /></Hex>
          <Hex><path d="M22 30Q46 34 50 66" strokeWidth="5" /><path d="M16 34L40 16M32 68L66 58" stroke="#aaa" strokeWidth="2" /></Hex>
          <Hex><path d="M30 56L56 30" strokeWidth="5" /><path d="M22 52H33V63H22ZM51 22H62V33H51Z" fill="#222" strokeWidth="4" /></Hex>
          <Hex><path d="M42 27L57 42L42 57L27 42Z" strokeWidth="5" /><path d="M26 24L66 62M60 22L20 62" stroke="#999" strokeWidth="2" /></Hex>
        </Group>
        <Sep />
        <Group cols="grid-cols-3">
          <Hex><path d="M24 30L44 20L60 28V54L40 64L24 54Z" fill="#ddd" stroke="#fff" strokeWidth="2" /><path d="M24 30L42 37L60 28M42 37V63" stroke="#555" strokeWidth="3" /></Hex>
          <Hex><path d="M22 22L62 62M62 22L22 62M42 18V66M18 42H66M26 30H58V54H26ZM34 36H50V48H34Z" stroke="#ddd" strokeWidth="2.300" /></Hex>
          <Hex><Glyph size={26} x={30} y={38}>A</Glyph><Glyph size={26} x={58} y={38}>C</Glyph><Glyph size={26} x={30} y={67}>B</Glyph><path d="M40 44H62L42 66Z" fill="#eee" stroke="none" /></Hex>
          <Hex><path d="M20 48L44 18Q60 20 66 38L40 66Q24 64 20 48Z" fill="url(#steel)" strokeWidth="2" /><ellipse cx="32" cy="54" rx="11" ry="13" transform="rotate(-40 32 54)" stroke="#444" strokeWidth="3" fill="#999" /></Hex>
          <Hex><path d="M26 56Q38 36 36 22L60 20Q56 42 60 64Q42 54 26 56Z" fill="#bbb" strokeWidth="3" /><path d="M48 22V58M32 42H58" stroke="#666" strokeWidth="2.5" /></Hex>
          <Hex><path d="M22 56L28 28Q40 22 44 32Q52 22 64 26L62 56Q50 50 44 58Q34 50 22 56Z" fill="#333" strokeWidth="4" /><path d="M44 34V56M28 50L60 32" strokeWidth="2.500" /></Hex>
        </Group>
        <Sep />
        <Group cols="grid-cols-3">
          <Hex><path d="M42 25L32 34Q24 45 34 54Q44 62 54 52L62 43" strokeWidth="11" stroke="#ddd" /><path d="M42 42L54 30" strokeWidth="6" /></Hex>
          <Hex><path d="M42 18V66M34 26L50 34V52L34 58Z" strokeWidth="4" /><path d="M18 42H64" strokeWidth="6" /><path d="M54 30L68 42L54 54Z" fill="#fff" stroke="none" /></Hex>
          <Hex><path d="M24 34V24H34M50 24H60V34M60 50V60H50M34 60H24V50" strokeWidth="3" /><path d="M34 34H40V40H34ZM48 33H54V39H48ZM40 46H46V52H40ZM51 46H56V51H51Z" fill="#fff" strokeWidth="2" /></Hex>
          <Hex><path d="M42 42Q48 36 50 44Q48 54 38 51Q29 44 35 34Q48 26 57 38Q61 56 46 61Q26 64 23 46Q22 26 42 22Q60 24 66 38" stroke="#ccc" strokeWidth="3.500" /></Hex>
          <Hex><path d="M16 40H34M50 46H70M26 52V40Q28 26 38 30Q42 34 42 42Q42 56 50 56Q58 54 58 40V32" strokeWidth="5" /></Hex>
          <Hex><path d="M56 24Q34 20 28 38Q24 60 42 62Q56 60 55 50Q48 42 40 48" strokeWidth="6" /><path d="M46 36H66V20Z" fill="#fff" stroke="none" /></Hex>
        </Group>
      </Panel>
      <Panel title="Primitive" w="w-[248px]" plus pl="pr-3">
        <Group cols="grid-cols-2">
          <Hex><circle cx="42" cy="42" r="18" fill="#fff" stroke="none" /><path d="M31 51A13 13 0 0 1 51 31Z" fill="#111" stroke="none" /></Hex>
          <Hex><Glyph size={44} y={57} len={46} serif>0.1</Glyph></Hex>
          <Hex><Glyph size={48} y={59}>7</Glyph></Hex>
          <Hex><Glyph size={52} y={59} serif>A</Glyph></Hex>
        </Group>
        <Sep />
        <Group cols="grid-cols-4">
          <Hex><path d="M42 42L40 18M42 42L60 24M42 42L66 46M42 42L54 64M42 42L34 66M42 42L18 50M42 42L24 28" strokeWidth="3.500" /><circle cx="42" cy="42" r="10" fill="#fff" stroke="none" /></Hex>
          <Hex><path d="M14 32L24 16Q42 10 60 16L68 30Q66 46 50 50L32 66L34 50Q18 46 14 32Z" fill="#fff" stroke="none" /><text x="42" y="43" textAnchor="middle" fontSize="29" fontWeight="bold" fill="#111" stroke="none" fontFamily="Liberation Sans">UC</text></Hex>
          <Hex><path d="M34 20V64M50 20V64M20 34H64M20 50H64" /></Hex>
          <Hex><path d="M30 24H22V60H30M54 24H62V60H54M32 30H38V37H32ZM46 30H52V37H46ZM32 47H38V54H32ZM46 47H52V54H46Z" strokeWidth="3" /></Hex>
          <Hex><path d="M20 24H60M16 32H60M14 40H54M18 50H44M22 60H38" stroke="#aaa" strokeWidth="3" /><path d="M26 66L52 44" strokeWidth="7" /><path d="M38 38L64 34L58 58Z" fill="#fff" stroke="none" /></Hex>
          <Hex><path d="M16 42H68M32 26V58M52 26V58" strokeWidth="5" /></Hex>
          <Hex><Glyph size={44} y={57} len={40} serif>ID</Glyph></Hex>
          <Hex><circle cx="42" cy="42" r="18" fill="#fff" stroke="none" /><circle cx="42" cy="42" r="12" stroke="#555" strokeWidth="2" /><path d="M34 34L42 43L52 40" stroke="#111" /></Hex>
        </Group>
        <Sep />
        <Group cols="grid-cols-2">
          <Hex><path d="M18 30L50 62M24 22L60 58M34 16L66 48M14 38L42 66M60 22L24 58M66 36L38 64M48 18L18 48M68 46L50 64M36 14L16 34" stroke="#aaa" strokeWidth="3" strokeDasharray="3 2" /></Hex>
          <Hex><text x="42" y="52" textAnchor="middle" fontSize="29" fill="#fff" stroke="none" fontFamily="Liberation Sans">C:/</text></Hex>
          <Hex light><path d="M42 74V46L24 34M42 46L60 28M42 38L34 20M54 40L68 44M30 40L16 46M28 60L18 54M54 60L64 54M50 24V14" stroke="#111" strokeWidth="5.5" /></Hex>
          <Hex><circle cx="42" cy="45" r="24" fill="url(#ball)" stroke="none" /></Hex>
        </Group>
      </Panel>
      <Panel title="Input" w="w-[360px]">
        <Group cols="grid-cols-1">
          <Tile><path d="M42 22V44" stroke="#000" strokeWidth="8" /><path d="M30 40H54L42 54Z" fill="#000" /><path d="M18 66V60H66V66M26 66V60M34 66V60M42 66V60M50 66V60M58 66V60" stroke="#000" strokeWidth="3" /></Tile>
          <Tile fill="#ffc832"><Scribble /></Tile>
        </Group>
        <Sep />
        <Group cols="grid-cols-3">
          <Tile><path d="M28 18H56V66H28Z" fill="#222" stroke="#000" strokeWidth="3" /><path d="M31 21H53V42H31Z" fill="#ccc" /></Tile>
          <Tile><text x="46" y="32" textAnchor="middle" fontSize="34" fontWeight="bold" fill="#777" fontFamily="Liberation Sans">4</text><text x="44" y="70" textAnchor="middle" fontSize="44" fontWeight="bold" fill="#222" fontFamily="Liberation Sans">5</text></Tile>
          <Tile><path d="M20 20H64V64H20Z" fill="#333" stroke="#000" strokeWidth="4" /><path d="M26 26H58V58H26Z" fill="#4e4e4e" /></Tile>
          <Cell><circle cx="42" cy="42" r="32" fill="#999" stroke="#333" strokeWidth="4" /><circle cx="42" cy="42" r="23" fill="#333" stroke="#ccc" strokeWidth="3" /><path d="M56 30L74 42L56 56" fill="#333" /></Cell>
          <Tile><path d="M18 18H66V30H18ZM18 36H66V48H18ZM18 54H66V66H18Z" fill="#ddd" stroke="#222" strokeWidth="3" /></Tile>
          <Tile fill="#eee"><path d="M8 50H36V76H8Z" fill="#ccc" /><path d="M38 8V76M8 48H76" stroke="#888" strokeWidth="2" /><path d="M40 46V28" stroke="#d22" strokeWidth="7" /><path d="M27 32L40 12L53 32Z" fill="#e33" stroke="#611" strokeWidth="2" /><path d="M42 48H60" stroke="#06c" strokeWidth="7" /><path d="M56 34L76 48L56 62Z" fill="#18f" stroke="#024" strokeWidth="2" /><circle cx="40" cy="48" r="6" fill="#fff" stroke="#000" strokeWidth="2" /></Tile>
        </Group>
        <Sep />
        <Group cols="grid-cols-2">
          <Tile fill="url(#pink)"><path d="M10 53H74V74H10Z" fill="#a00c60" /><path d="M10 53H34L20 74H10Z" fill="#3a0a2c" /><path d="M10 53H74" stroke="#fff" strokeWidth="3" /><circle cx="14" cy="53" r="5" fill="#fff" stroke="#000" strokeWidth="2" /><circle cx="58" cy="53" r="5" fill="#fff" stroke="#000" strokeWidth="2" /></Tile>
          <Cell><rect x="6" y="6" width="76" height="70" fill="#3a3a3a" /><rect x="6" y="6" width="76" height="24" fill="#111" /><text x="44" y="27" textAnchor="middle" fontSize="22" fill="#fff" textLength="46" fontFamily="Liberation Sans">AUG</text><text x="44" y="68" textAnchor="middle" fontSize="46" fontWeight="bold" fill="#fff" textLength="58" fontFamily="Liberation Sans">20</text></Cell>
          <Tile fill="#38d838"><path d="M10 10H26V26H10ZM42 26H58V42H42ZM26 42H42V58H26Z" fill="#b5ff8f" /><path d="M26 26H42V42H26ZM10 42H26V58H10ZM42 58H58V74H42Z" fill="#0a8c2c" /><path d="M58 10H74V26H58ZM26 58H42V74H26Z" fill="#0d5f20" /><path d="M58 42H74V58H58Z" fill="#7cf05c" /></Tile>
          <Cell><circle cx="44" cy="42" r="33" fill="#1d1d1d" stroke="#555" strokeWidth="3" /><path d="M44 42L52 16M44 42L22 46" stroke="#fff" strokeWidth="5" /><path d="M44 12V20M44 64V72M14 42H22M66 42H74M24 22L29 27M64 22L59 27M24 62L29 57M64 62L59 57" stroke="#ddd" strokeWidth="3" /></Cell>
        </Group>
      </Panel>
    </div>
  );
}

type Box = [number, number, number, number];
const greyNodes: Box[] = [
  [361, 85, 428, 169], [500, 61, 566, 106], [716, 67, 782, 130], [484, 208, 548, 271], [667, 217, 731, 260], [958, 97, 1039, 181],
  [947, 206, 1046, 290], [850, 655, 931, 718], [985, 661, 1067, 727], [1135, 157, 1219, 223], [1279, 121, 1360, 166], [1435, 125, 1500, 190],
  [1546, 131, 1610, 175], [1702, 133, 1771, 157], [1675, 190, 1753, 232], [1807, 179, 1872, 223], [1712, 256, 1782, 280], [1939, 214, 2005, 257],
  [2136, 179, 2200, 207], [2146, 227, 2209, 256], [2224, 121, 2300, 166], [1295, 250, 1358, 295], [1441, 236, 1505, 301], [1549, 241, 1614, 286],
  [1382, 655, 1445, 685], [1501, 703, 1567, 746], [1382, 733, 1445, 760], [190, 772, 256, 818], [997, 782, 1063, 846], [1048, 875, 1122, 938],
  [1172, 889, 1238, 953], [1177, 982, 1241, 1010], [1310, 895, 1391, 958], [1307, 998, 1408, 1062], [1465, 899, 1545, 964], [1465, 992, 1544, 1057],
  [1592, 940, 1658, 985], [1721, 952, 1786, 995], [1654, 1024, 1718, 1053],
];
const lightNodes: Box[] = [[193, 1006, 257, 1051], [1828, 448, 1895, 533], [1826, 655, 1925, 740], [1916, 955, 1999, 1040]];
const yellowNodes: Box[] = [[142, 826, 302, 875], [115, 1238, 275, 1288], [877, 775, 953, 845], [1192, 1030, 1246, 1071], [1795, 1052, 1877, 1097]];
const groups: [Box, string, number, number, number][] = [
  [[79, 49, 263, 119], "Radius", 129, 211, 81], [[82, 214, 289, 290], "Number of legs", 95, 273, 247], [[103, 320, 289, 391], "Fillet", 165, 222, 353],
  [[91, 415, 308, 485], "Edge height", 152, 294, 448], [[97, 502, 310, 575], "Base thickness", 117, 295, 534],
  [[57, 601, 399, 679], "Thickness of main channel", 72, 385, 634], [[103, 699, 400, 884], "Height of main channel", 116, 386, 732],
  [[97, 920, 355, 995], "Distance b/w points", 110, 340, 953], [[61, 1082, 469, 1162], "Thickness of secondary channel", 77, 455, 1115],
  [[60, 1196, 476, 1297], "Distance b/w  secondary channel", 74, 463, 1229], [[79, 1330, 452, 1400], "Length of  secondary channel", 92, 439, 1362],
];
const sliders: [number, number, number, number][] = [
  [88, 89, 253, 133], [93, 160, 258, 139], [93, 259, 274, 155], [113, 361, 278, 160], [100, 455, 263, 143], [106, 545, 281, 128], [116, 649, 290, 171],
  [131, 744, 305, 152], [130, 965, 304, 150], [115, 1132, 290, 155], [103, 1370, 278, 140], [661, 282, 833, 715],
];
const wires: Box[] = [
  [253, 100, 361, 117], [258, 171, 361, 166], [428, 157, 716, 118], [274, 268, 361, 136], [274, 268, 484, 239], [428, 106, 500, 85], [428, 106, 484, 219],
  [566, 94, 716, 79], [566, 94, 667, 228], [782, 99, 958, 112], [548, 220, 667, 247], [731, 238, 958, 112], [731, 238, 947, 218], [833, 292, 958, 130],
  [833, 292, 947, 239], [1039, 139, 1279, 135], [1039, 139, 1135, 170], [1039, 139, 1135, 176], [1046, 247, 1135, 205], [1046, 250, 1295, 263],
  [1219, 190, 1279, 155], [1219, 210, 1295, 280], [1360, 146, 1435, 138], [1500, 157, 1546, 155], [1610, 149, 1702, 145], [1610, 164, 1675, 200],
  [1771, 145, 1807, 190], [1614, 268, 1712, 268], [1614, 273, 1675, 222], [1505, 268, 1549, 262], [1505, 273, 1549, 268], [1358, 273, 1441, 248],
  [1358, 273, 1441, 264], [1505, 262, 1675, 222], [1505, 249, 1675, 226], [1753, 211, 1807, 190], [1753, 211, 1807, 205], [1872, 201, 1939, 227],
  [1872, 201, 2136, 192], [1614, 253, 1939, 244], [2005, 235, 2224, 132], [2005, 235, 2146, 242], [2200, 193, 2224, 154], [2209, 241, 2290, 294],
  [290, 658, 850, 665], [931, 665, 985, 672], [1067, 674, 1826, 687], [1067, 694, 1382, 670],
  [1445, 670, 1501, 713], [1445, 746, 1501, 735], [1567, 724, 1826, 667], [305, 755, 850, 688], [305, 755, 1382, 746], [304, 977, 850, 703],
  [953, 808, 997, 814], [1122, 893, 1172, 901], [1122, 922, 1172, 922], [1238, 907, 1310, 907], [1238, 907, 1307, 1010], [1391, 907, 1465, 911],
  [1391, 927, 1465, 931], [1408, 1015, 1465, 1009], [1408, 1031, 1465, 1024], [1408, 1045, 1465, 1045], [1545, 931, 1592, 953], [1544, 1024, 1592, 953],
  [1658, 964, 1721, 964], [1786, 973, 1916, 967], [1786, 988, 1916, 988], [1544, 1001, 1721, 991], [1544, 1043, 1654, 1039], [1241, 995, 1310, 927],
  [1246, 1049, 1310, 945], [1246, 1038, 1307, 1028], [1246, 1049, 1307, 1048], [1241, 995, 1307, 1028],
];
const freeWires = [
  "M1358 273C1600 215 1850 127 2224 127",
  "M1505 252C1750 200 1950 148 2224 148",
  "M731 238C830 238 860 300 820 395S740 530 742 600S790 670 850 670",
  "M1219 222C1320 285 1440 460 1828 460",
  "M1782 268C1820 268 1785 215 1790 200Q1792 190 1807 190",
  "M2290 240Q2265 270 2275 285",
  "M278 372C700 372 950 335 1295 283",
  "M263 466C700 466 950 400 1310 297L1441 267",
  "M263 467C700 467 950 403 1295 299L1441 275",
  "M281 556C700 556 1000 470 1441 301",
  "M281 556C900 556 1000 500 1500 390S2050 318 2290 316",
  "M931 665C1180 590 1240 481 1828 481",
  "M281 556C330 556 345 590 300 630C250 680 150 750 148 775C146 800 165 804 190 804",
  "M281 556C430 556 500 620 482 690C460 780 330 930 258 1010L222 1053L9 1320",
  "M305 755C330 757 180 765 190 784",
  "M256 797Q268 797 258 792M142 847Q130 847 138 840C145 830 200 828 208 820",
  "M304 977C330 977 180 1000 190 1017",
  "M257 1031C300 1031 305 1055 270 1085C200 1140 78 1220 80 1245C82 1262 100 1263 115 1263",
  "M60 1040C400 1042 900 1060 1240 1060S1600 1065 1795 1067",
  "M1877 1070L2013 1073M1877 1072L2013 1072",
  "M290 1142C700 1142 950 1080 1190 1043L1307 1030",
  "M290 1142C900 1142 1100 1072 1795 1072",
  "M278 1380C700 1380 950 1010 1240 968Q1320 955 1465 952",
  "M278 1380C700 1380 950 1120 1192 1072L1307 1048",
  "M640 1443C900 1340 1100 1120 1300 1080Q1360 1062 1465 1057",
  "M1063 814C1190 814 1230 870 1340 895M1063 814C1250 814 1200 1005 1465 1003",
  "M1067 694C1110 700 980 760 985 785Q986 793 997 793",
  "M1067 694C1125 694 1110 745 1090 770C1070 800 1005 830 1012 855C1020 885 1030 886 1048 886",
  "M1718 1040C1745 1040 1705 985 1712 982H1721",
];

function NodeCanvas() {
  return (
    <svg viewBox="9 0 2277 1443" className="block h-[481px] w-[759px]" fill="none">
      <rect x="9" width="2277" height="1443" fill="#d4d0c8" />
      {groups.map(([[x1, y1, x2, y2], t]) => (
        <rect key={t} x={x1} y={y1} width={x2 - x1} height={y2 - y1} fill={t.startsWith("Distance b/w  ") ? "#ab88fd" : "#bba3e8"} stroke="#9a86c4" strokeWidth="3" />
      ))}
      <g stroke="#3b3935" strokeWidth="2.400">
        {wires.map(([a, b, c, d], i) => {
          const m = (a + c) / 2;
          return <path key={i} d={`M${a} ${b}C${m} ${b} ${m} ${d} ${c} ${d}`} />;
        })}
        {freeWires.map((d) => <path key={d} d={d} />)}
      </g>
      <g stroke="#2c2b30" strokeWidth="3.200">
        {sliders.map(([x, y, x2, k]) => (
          <g key={`${x}-${y}`}>
            <rect x={x} y={y} width={x2 - x} height="20" fill="#cbcbcb" />
            <rect x={x} y={y} width={k - x} height="20" fill="#8a8896" />
          </g>
        ))}
        {greyNodes.map(([a, b, c, d]) => <rect key={`${a}-${b}`} x={a} y={b} width={c - a} height={d - b} fill="url(#node)" />)}
        {lightNodes.map(([a, b, c, d]) => <rect key={`${a}-${b}`} x={a} y={b} width={c - a} height={d - b} fill="#cdcdcd" />)}
        {yellowNodes.map(([a, b, c, d]) => <rect key={`${a}-${b}`} x={a} y={b} width={c - a} height={d - b} fill="#fffb14" />)}
      </g>
      {groups.map(([, t, x1, x2, y]) => (
        <text key={t} x={x1} y={y} textLength={x2 - x1} fontSize="24" fontWeight="bold" fontFamily="Liberation Sans, sans-serif" fill="#1d1830" className="whitespace-pre">{t}</text>
      ))}
    </svg>
  );
}

const ghMenu: [string, string][] = [["File", "w-[37px]"], ["Edit", "w-[39px]"], ["View", "w-11"], ["Display", "w-[57px]"], ["Solution", "w-[63px]"], ["Help", "w-10"]];
const ghTabs: [string, string][] = [
  ["Math", "w-[41px]"], ["Set", "w-[34px]"], ["Vec", "w-[35px]"], ["Crv", "w-[34px]"], ["Srf", "w-[31px]"], ["Msh", "w-[39px]"], ["Int", "w-7"],
  ["Trns", "w-[39px]"], ["Dis", "w-[34px]"], ["DIVA 4", "w-[51px]"], ["Fly", "w-[31px]"], ["M+", "w-8"], ["Mosquito", "w-[63px]"], ["Wb", "w-8"],
  ["Gismo", "w-[49px]"], ["Bowerbird", "w-[68px]"], ["Pufferfish", "w-[63px]"], ["tOP", "w-10"],
];

function Grasshopper() {
  return (
    <div className={`absolute left-[603px] top-0 flex h-[706px] w-[762px] flex-col overflow-hidden border-b border-l border-[#2b7cb9] bg-[#f0f0f0] text-[12px] shadow-[-2px_0_8px_rgba(0,0,0,.3)] ${UI}`}>
      <div className="flex h-[31px] shrink-0 items-center bg-[#0078d7] pl-[8px] pt-px tracking-[-0.35px] text-white">Grasshopper - soft robotics</div>
      <div className="flex h-[27px] shrink-0 items-center pl-[13px] pt-px text-black">
        {ghMenu.map(([t, w]) => <span key={t} className={`${w} tracking-[-0.15px]`}>{t}</span>)}
      </div>
      <div className="flex h-[24px] shrink-0 items-end font-['Liberation_Sans',sans-serif]">
        <div className="flex h-[24px] w-[38px] shrink-0 justify-center rounded-t-[5px] border border-b-0 border-[#999] bg-[#fafafa] pt-px text-black">Prm</div>
        <div className="flex h-[23px] flex-1 border-b border-[#999] pl-[6px] pt-[2px] text-[#7a7a7a]">
          {ghTabs.map(([t, w]) => <span key={t} className={`${w} shrink-0 whitespace-nowrap`}>{t}</span>)}
        </div>
      </div>
      <div className="h-[87px] shrink-0 border-b-2 border-[#777]"><Ribbon /></div>
      <div className="flex h-[31px] shrink-0 items-center border-l border-[#555] bg-gradient-to-b from-[#fdfdfd] to-[#f2f2f2]">
        <svg viewBox="0 0 66 72" className="ml-[4px] h-6 w-[22px]">
          <path d="M10 30V12L22 3H44V30" fill="#fff" stroke="#555" strokeWidth="3" />
          <path d="M4 66V36H24L32 24H58V66Z" fill="#7cc63c" stroke="#2e6a10" strokeWidth="3" />
          <path d="M7 39H26L34 28H55V38L7 50Z" fill="#b8ea80" />
        </svg>
        <svg viewBox="0 0 72 72" className="ml-[7px] h-6 w-6">
          <path d="M4 4H68V68H12L4 60Z" fill="#2266d8" stroke="#0a2a70" strokeWidth="4" />
          <path d="M16 5H56V36H16Z" fill="#f2f2f2" /><path d="M22 14H50M22 22H50M22 30H50" stroke="#999" strokeWidth="3" />
          <path d="M20 46H52V68H20Z" fill="#ccd6ee" stroke="#0a2a70" strokeWidth="2" /><path d="M24 50H36V66H24Z" fill="#163f90" />
        </svg>
        <div className="ml-[6px] mr-[5px] h-5 w-px bg-[#b5b5b5]" />
        <div className="flex h-[23px] w-[136px] items-center justify-between border border-[#777] bg-white pl-[2px] pr-[4px] tracking-[-0.4px] text-black">
          33%
          <svg viewBox="0 0 8 5" className="h-[5px] w-2" fill="none" stroke="#444"><path d="M.5 .5L4 4L7.500 .5" /></svg>
        </div>
        <svg viewBox="0 0 72 72" className="ml-[5px] h-6 w-6" fill="none" stroke="#222" strokeWidth="11">
          <path d="M8 26V9H26M44 9H63V26M63 44V63H44M26 63H8V44" /><path d="M29 29L43 43M43 29L29 43" strokeWidth="6" />
        </svg>
        <svg viewBox="0 0 6 4" className="ml-[5px] h-1 w-1.5"><path d="M0 0H6L3 3.500Z" /></svg>
        <svg viewBox="0 0 66 48" className="ml-[8px] h-4 w-[22px]">
          <path d="M2 24Q33 -14 64 24Q33 58 2 24Z" fill="#fff" stroke="#123" strokeWidth="4" /><circle cx="33" cy="23" r="16" fill="#3a9fdc" stroke="#0a3a66" strokeWidth="3" /><circle cx="33" cy="23" r="7" fill="#000" /><circle cx="39" cy="18" r="4" fill="#fff" />
        </svg>
        <svg viewBox="0 0 6 4" className="ml-[7px] h-1 w-1.5"><path d="M0 0H6L3 3.500Z" /></svg>
        <svg viewBox="0 0 72 66" className="ml-[5px] h-[22px] w-6" fill="none">
          <path d="M6 22Q22 16 14 38Q6 60 20 60Q32 60 38 52" stroke="#611" strokeWidth="3.500" />
          <path d="M30 44L42 24L62 4Q72 8 70 26L48 50Z" fill="#e0281e" stroke="#7c0d08" strokeWidth="2" /><path d="M20 60L30 42L48 50Z" fill="#b88a56" stroke="#5a3010" strokeWidth="2" /><path d="M46 26L60 10" stroke="#ff9c90" strokeWidth="5" />
        </svg>
      </div>
      <div className="relative ml-0.5 h-[481px] shrink-0">
        <NodeCanvas />
        <div className="absolute bottom-0 left-0 flex h-[28px] w-[63px] items-center border border-[#111] bg-gradient-to-r from-[#f2f2f2] to-[#888]">
          <svg viewBox="0 0 84 84" className="h-7 w-7 shrink-0" fill="none"><rect x="8" y="9" width="68" height="66" rx="5" fill="#ffc832" stroke="#111" strokeWidth="4" /><Scribble /></svg>
          <svg viewBox="0 0 84 84" className="h-7 w-7 shrink-0" fill="none"><path d="M12 28L22 12L46 10L68 38L74 56L64 72L46 74L18 44Z" fill="#f58a1e" stroke="#9c2c00" strokeWidth="4" /><path d="M22 12L28 28L48 58L46 74M12 28L28 28L46 10M48 58L68 38M38 44L58 26M52 62L72 50" stroke="#b03a00" strokeWidth="3.5" /></svg>
        </div>
      </div>
      <div className="flex h-[24px] shrink-0 items-center border-t border-[#fff] pl-[4px] text-black">
        <svg viewBox="0 0 16 16" className="mr-[3px] h-4 w-4"><circle cx="8" cy="8" r="7.500" fill="#1560a8" stroke="#0a2c58" /><path d="M6.500 3H9.500V9H6.500ZM6.500 11H9.500V13H6.500Z" stroke="#fff" strokeWidth=".9" fill="#1560a8" /></svg>
        <span className="pt-px tracking-[-0.29px]">Save successfully completed... (30 seconds ago)</span>
      </div>
    </div>
  );
}

export default function App() {
  return (
    <div className="relative h-[739px] w-[1365px] overflow-hidden">
      <Defs />
      <Rhino />
      <Grasshopper />
    </div>
  );
}
